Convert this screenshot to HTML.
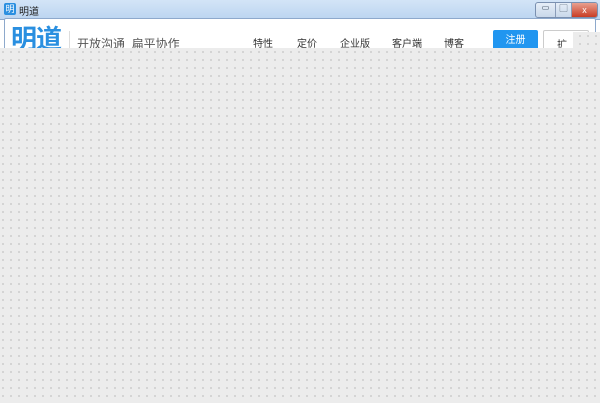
<html><head><style>
body{margin:0;width:600px;height:403px;overflow:hidden;position:relative;font-family:"Liberation Sans","Noto Sans CJK SC",sans-serif;background:#fff}
.title{position:absolute;left:0;top:0;width:600px;height:19px;background:linear-gradient(#d3e4f7,#bcd5f0);border-bottom:1px solid #8ea9cc}
.frame{position:absolute;left:4px;top:18px;width:590px;height:60px;background:#fff;border:1px solid #8ea9cc;border-radius:2px}
.t{position:absolute;font-size:12px;color:#333}
.grey{position:absolute;background:#ececec;background-image:radial-gradient(circle,#c4c4c4 0.7px,transparent 1px);background-size:8px 8px;background-position:-1px 0px}
</style></head><body>
<div class="title"></div>
<div style="position:absolute;left:4px;top:3px;width:12px;height:12px;background:#2a8fe0;border-radius:2px;color:#fff;font-size:9px;line-height:12px;text-align:center">明</div>
<div class="t" style="left:19px;top:3px;font-size:10px;color:#222">明道</div>
<div style="position:absolute;left:535px;top:2px;width:61px;height:14px;border:1px solid #7a90b0;border-radius:3px;background:linear-gradient(#e6eef8,#c9d8ea);overflow:hidden">
<div style="position:absolute;left:0;top:0;width:19px;height:14px;border-right:1px solid #8a9cb8;font-size:8px;text-align:center;color:#345">▭</div>
<div style="position:absolute;left:20px;top:0;width:15px;height:14px;border-right:1px solid #8a9cb8;font-size:8px;text-align:center;color:#345">▢</div>
<div style="position:absolute;left:36px;top:0;width:25px;height:14px;background:linear-gradient(#e8a090,#c83c24);color:#fff;font-size:9px;text-align:center;line-height:14px">x</div></div>
<div class="frame"></div>
<div class="t" style="left:11px;top:24px;font-size:26px;line-height:30px;font-weight:bold;color:#2a8fe0;letter-spacing:-1px">明道</div>
<div style="position:absolute;left:69px;top:31px;width:1px;height:20px;background:#ddd"></div>
<div class="t" style="left:77px;top:35px;font-size:12px;color:#555">开放沟通&nbsp; 扁平协作</div>
<div class="t" style="left:253px;top:35px;font-size:10px">特性</div>
<div class="t" style="left:297px;top:35px;font-size:10px">定价</div>
<div class="t" style="left:340px;top:35px;font-size:10px">企业版</div>
<div class="t" style="left:392px;top:35px;font-size:10px">客户端</div>
<div class="t" style="left:444px;top:35px;font-size:10px">博客</div>
<div style="position:absolute;left:493px;top:30px;width:45px;height:22px;background:#2196f0;border-radius:2px;color:#fff;font-size:10px;text-align:center;line-height:22px">注册</div>
<div style="position:absolute;left:543px;top:30px;width:44px;height:22px;border:1px solid #ccc;border-radius:2px;background:#fff"></div>
<div class="t" style="left:557px;top:36px;font-size:10px">扩</div>
<div class="grey" style="left:0;top:48px;width:600px;height:355px"></div>
<div class="grey" style="left:573px;top:32px;width:27px;height:16px;background-position:-5px 0px"></div>
</body></html>
